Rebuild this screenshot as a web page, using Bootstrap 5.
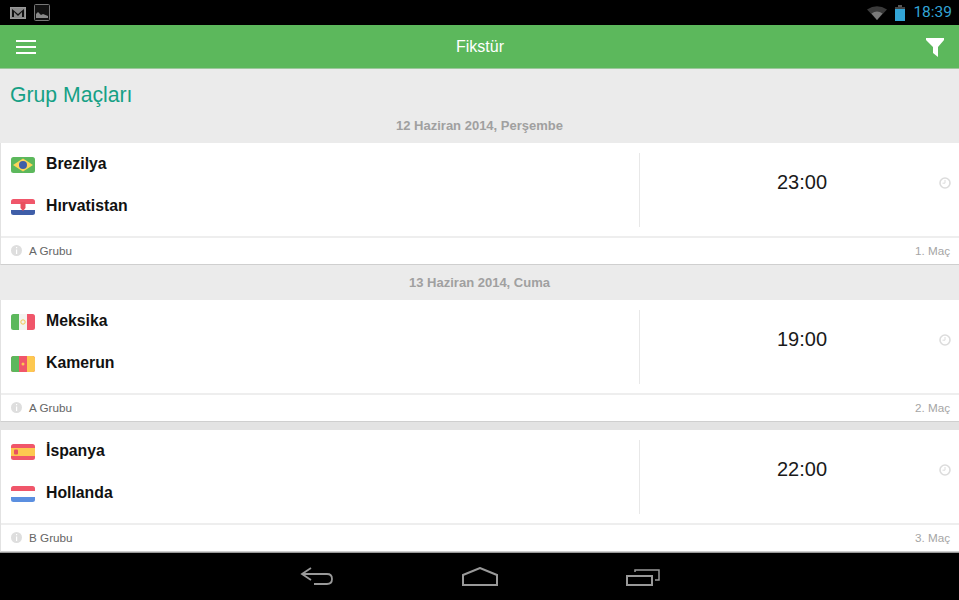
<!DOCTYPE html>
<html lang="tr">
<head>
    <meta charset="UTF-8">
    <meta name="viewport" content="width=device-width, initial-scale=1.0">
    <title>Fikstür</title>
    <link href="https://cdn.jsdelivr.net/npm/bootstrap@5.3.0/dist/css/bootstrap.min.css" rel="stylesheet">
    <style>
        html, body { height: 100%; overflow: hidden; }
        body {
            background: #ebebeb;
            font-family: "Liberation Sans", Arial, sans-serif;
            color: #111;
        }
        .screen { height: 600px; }
        .status-bar { height: 25px; background: #000; padding: 0 7px 0 10px; }
        .status-time { color: #33a5d6; font-family: Roboto, sans-serif; font-size: 15.5px; line-height: 25px; margin-left: 8px; }
        .app-bar {
            height: 44px;
            background: #5cb85c;
            border-bottom: 1px solid #9cc79c;
            padding: 0 15px 0 16px;
            color: #fff;
        }
        .app-title { font-size: 16px; flex: 1; text-align: center; padding-right: 2px; }
        .filter-icon { margin-top: 2px; }
        .burger { width: 20px; display: flex; flex-direction: column; gap: 4px; }
        .burger span { display: block; height: 2px; background: #fff; }
        .content { flex: 1; overflow: hidden; min-height: 0; }
        .page-head { height: 47px; padding: 13px 10px 0; font-size: 21.2px; line-height: 26px; color: #16a085; margin: 0; font-weight: 400; }
        .day-head { height: 27px; line-height: 18px; padding-top: 1px; text-align: center; font-size: 13px; font-weight: 700; color: #a0a0a0; }
        .day-head.gap-top { height: 35px; padding-top: 8px; line-height: 19px; }
        .match-card { background: #fff; border-left: 1px solid #e2e2e2; border-bottom: 1px solid #cfcfcf; height: 122px; }
        .match-main { height: 95px; padding-top: 10px; border-bottom: 2px solid #eeeeee; }
        .teams { width: 639px; height: 74px; border-right: 1px solid #e8e8e8; padding-left: 10px; }
        .team { height: 42px; font-size: 15.8px; font-weight: 700; line-height: 21px; gap: 11px; }
        .team svg { flex: none; margin-top: 4px; }
        .kickoff { flex: 1; height: 74px; }
        .kickoff-time { flex: 1; text-align: center; font-size: 20px; line-height: 24px; padding-top: 17px; padding-left: 25px; color: #1a1a1a; }
        .kickoff svg { margin: 24px 8px 0 0; }
        .match-foot { height: 26px; padding: 0 9px 0 10px; font-size: 11.7px; color: #666; }
        .foot-group { gap: 7px; }
        .foot-num { color: #a5a5a5; }
        .sep { height: 8px; background: #e3e3e3; }
        .nav-bar { height: 48px; background: #000; border-top: 1px solid #999; gap: 128px; }
    </style>
</head>
<body>
<div class="screen d-flex flex-column">
    <div class="status-bar d-flex align-items-center">
        <svg width="16" height="12" viewBox="0 0 16 12"><rect x=".5" y=".5" width="15" height="11" fill="#8a8a8a" stroke="#999"/><path d="M2 2l6 5 6-5v8h-2V5L8 9 4 5v5H2z" fill="#111"/></svg>
        <svg class="ms-2" width="16" height="17" viewBox="0 0 16 17"><rect x=".5" y=".5" width="15" height="16" rx="1" fill="#111" stroke="#777"/><path d="M2 14v-4l2-2 3 3 2-1 5 2v2z" fill="#8a8a8a"/></svg>
        <div class="ms-auto d-flex align-items-center">
            <svg width="20" height="14" viewBox="0 0 20 14"><path d="M0 3.5Q10-3 20 3.5L10 14z" fill="#3a3a3a"/><path d="M4.500 7.500Q10 3.500 15.500 7.500L10 14z" fill="#7a7a7a"/></svg>
            <svg class="ms-2" width="10" height="16" viewBox="0 0 10 16"><rect x="3" y="0" width="4" height="2" fill="#555"/><rect x="0" y="2" width="10" height="2" fill="#444"/><rect x="0" y="4" width="10" height="12" fill="#33a5d6"/></svg>
            <span class="status-time">18:39</span>
        </div>
    </div>
    <div class="app-bar d-flex align-items-center">
        <div class="burger"><span></span><span></span><span></span></div>
        <div class="app-title">Fikstür</div>
        <svg class="filter-icon" width="18" height="19" viewBox="0 0 18 19"><path d="M0 0h18v2l-6 7v10l-5-4V9L0 2z" fill="#fff"/></svg>
    </div>
    <div class="content">
        <h1 class="page-head">Grup Maçları</h1>

        <div class="day-head">12 Haziran 2014, Perşembe</div>
        <div class="match-card">
            <div class="match-main d-flex">
                <div class="teams">
                    <div class="team d-flex"><svg width="24" height="16" viewBox="0 0 24 16"><rect width="24" height="16" rx="2.500" fill="#5cb85c"/><path d="M12 1.500L22 8l-10 6.500L2 8z" fill="#fdd55a"/><circle cx="12" cy="8" r="4" fill="#3f5ea8"/></svg>Brezilya</div>
                    <div class="team d-flex"><svg width="24" height="16" viewBox="0 0 24 16"><rect width="24" height="16" rx="2.500" fill="#fff"/><path d="M0 2.500A2.500 2.500 0 0 1 2.500 0h19A2.500 2.500 0 0 1 24 2.500V5H0z" fill="#f0566a"/><path d="M0 11h24v2.500a2.500 2.500 0 0 1-2.500 2.500h-19A2.500 2.500 0 0 1 0 13.500z" fill="#3f5ea8"/><path d="M9.500 3h5v6L12 12 9.500 9z" fill="#e8505f"/></svg>Hırvatistan</div>
                </div>
                <div class="kickoff d-flex">
                    <div class="kickoff-time">23:00</div>
                    <svg width="12" height="12" viewBox="0 0 12 12"><circle cx="6" cy="6" r="5" fill="none" stroke="#dcdcdc" stroke-width="1.600"/><path d="M6 3v3.200H3.500" fill="none" stroke="#dcdcdc"/></svg>
                </div>
            </div>
            <div class="match-foot d-flex align-items-center justify-content-between">
                <div class="foot-group d-flex align-items-center"><svg width="11" height="11" viewBox="0 0 11 11"><circle cx="5.500" cy="5.500" r="5.500" fill="#dedede"/><path d="M5 2h1.200v1.300H5zM5 4.500h1.200V9H5z" fill="#fff"/></svg><span>A Grubu</span></div>
                <span class="foot-num">1. Maç</span>
            </div>
        </div>

        <div class="day-head gap-top">13 Haziran 2014, Cuma</div>
        <div class="match-card">
            <div class="match-main d-flex">
                <div class="teams">
                    <div class="team d-flex"><svg width="24" height="16" viewBox="0 0 24 16"><rect width="24" height="16" rx="2.500" fill="#f4f4f0"/><path d="M0 2.500A2.500 2.500 0 0 1 2.500 0H8v16H2.500A2.500 2.500 0 0 1 0 13.500z" fill="#5cb85c"/><path d="M16 0h5.500A2.500 2.500 0 0 1 24 2.500v11a2.500 2.500 0 0 1-2.500 2.500H16z" fill="#f0566a"/><circle cx="12" cy="8" r="2.200" fill="none" stroke="#f0c850"/></svg>Meksika</div>
                    <div class="team d-flex"><svg width="24" height="16" viewBox="0 0 24 16"><rect width="24" height="16" rx="2.500" fill="#f0566a"/><path d="M0 2.500A2.500 2.500 0 0 1 2.500 0H8v16H2.500A2.500 2.500 0 0 1 0 13.500z" fill="#5cb85c"/><path d="M16 0h5.500A2.500 2.500 0 0 1 24 2.500v11a2.500 2.500 0 0 1-2.500 2.500H16z" fill="#fdc850"/><circle cx="12" cy="8" r="1.500" fill="#fdc850"/></svg>Kamerun</div>
                </div>
                <div class="kickoff d-flex">
                    <div class="kickoff-time">19:00</div>
                    <svg width="12" height="12" viewBox="0 0 12 12"><circle cx="6" cy="6" r="5" fill="none" stroke="#dcdcdc" stroke-width="1.600"/><path d="M6 3v3.200H3.500" fill="none" stroke="#dcdcdc"/></svg>
                </div>
            </div>
            <div class="match-foot d-flex align-items-center justify-content-between">
                <div class="foot-group d-flex align-items-center"><svg width="11" height="11" viewBox="0 0 11 11"><circle cx="5.500" cy="5.500" r="5.500" fill="#dedede"/><path d="M5 2h1.200v1.300H5zM5 4.500h1.200V9H5z" fill="#fff"/></svg><span>A Grubu</span></div>
                <span class="foot-num">2. Maç</span>
            </div>
        </div>
        <div class="sep"></div>
        <div class="match-card">
            <div class="match-main d-flex">
                <div class="teams">
                    <div class="team d-flex"><svg width="24" height="16" viewBox="0 0 24 16"><rect width="24" height="16" rx="2.500" fill="#f0566a"/><rect y="4" width="24" height="8" fill="#fdc850"/><rect x="3" y="5.500" width="4" height="5" rx="1" fill="#e8505f"/></svg>İspanya</div>
                    <div class="team d-flex"><svg width="24" height="16" viewBox="0 0 24 16"><rect width="24" height="16" rx="2.500" fill="#fff"/><path d="M0 2.500A2.500 2.500 0 0 1 2.500 0h19A2.500 2.500 0 0 1 24 2.500V5H0z" fill="#f0566a"/><path d="M0 11h24v2.500a2.500 2.500 0 0 1-2.500 2.500h-19A2.500 2.500 0 0 1 0 13.500z" fill="#5b8fe0"/></svg>Hollanda</div>
                </div>
                <div class="kickoff d-flex">
                    <div class="kickoff-time">22:00</div>
                    <svg width="12" height="12" viewBox="0 0 12 12"><circle cx="6" cy="6" r="5" fill="none" stroke="#dcdcdc" stroke-width="1.600"/><path d="M6 3v3.200H3.500" fill="none" stroke="#dcdcdc"/></svg>
                </div>
            </div>
            <div class="match-foot d-flex align-items-center justify-content-between">
                <div class="foot-group d-flex align-items-center"><svg width="11" height="11" viewBox="0 0 11 11"><circle cx="5.500" cy="5.500" r="5.500" fill="#dedede"/><path d="M5 2h1.200v1.300H5zM5 4.500h1.200V9H5z" fill="#fff"/></svg><span>B Grubu</span></div>
                <span class="foot-num">3. Maç</span>
            </div>
        </div>
    </div>
    <div class="nav-bar d-flex align-items-center justify-content-center">
        <svg width="34" height="20" viewBox="0 0 34 20"><path d="M11 1L2 7l9 6M2 7h25q5 0 5 5t-5 5H14" fill="none" stroke="#999" stroke-width="1.800"/></svg>
        <svg width="36" height="20" viewBox="0 0 36 20"><path d="M1 18V8l17-7 17 7v10z" fill="none" stroke="#999" stroke-width="2"/></svg>
        <svg width="34" height="20" viewBox="0 0 34 20"><path d="M1 9h25v9H1z" fill="none" stroke="#999" stroke-width="2"/><path d="M9 5V3h24v10h-4" fill="none" stroke="#999" stroke-width="1.500"/></svg>
    </div>
</div>
<script src="https://cdn.jsdelivr.net/npm/bootstrap@5.3.0/dist/js/bootstrap.bundle.min.js"></script>
</body>
</html>
